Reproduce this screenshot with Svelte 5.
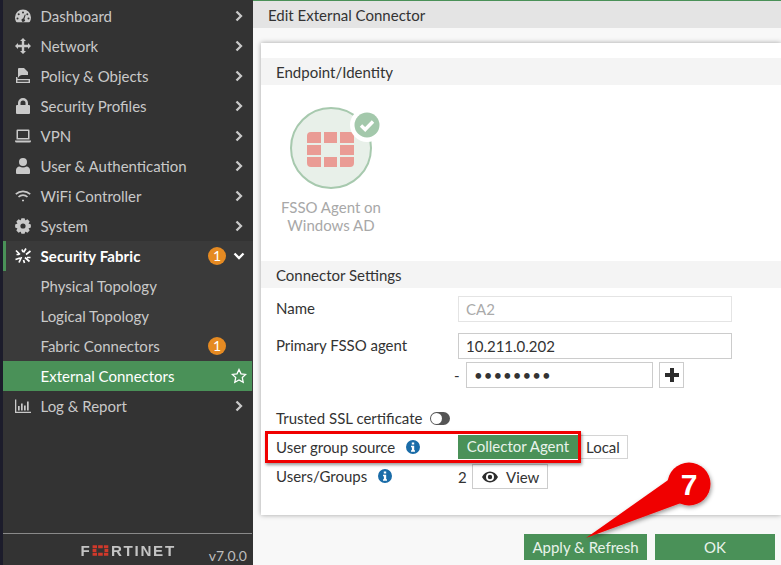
<script lang="ts">
	// eight-tooth gear, generated so the teeth stay even
	function gear() {
		let d = '';
		for (let i = 0; i < 8; i++) {
			const a = (i * Math.PI) / 4;
			const pts: [number, number][] = [
				[-0.42, 5.9],
				[-0.27, 8],
				[0.27, 8],
				[0.42, 5.9]
			];
			for (const [o, r] of pts) {
				const x = 8 + r * Math.sin(a + o * (r > 7 ? 0.72 : 1));
				const y = 8 - r * Math.cos(a + o * (r > 7 ? 0.72 : 1));
				d += (d ? 'L' : 'M') + x.toFixed(2) + ' ' + y.toFixed(2);
			}
		}
		return d + 'zM8 5.4a2.6 2.6 0 1 0 0 5.2a2.6 2.6 0 0 0 0-5.2z';
	}

	const icons: Record<string, { fill?: string; stroke?: string }> = {
		dashboard: {
			fill: 'M8 1.5a8 8 0 0 0-8 8c0 1.6.4 3 1.1 4.3c.2.3.5.5.9.5h12c.4 0 .7-.2.9-.5c.7-1.3 1.1-2.7 1.1-4.3a8 8 0 0 0-8-8zM8 3.5a1 1 0 1 1 0 2a1 1 0 0 1 0-2zM3.7 5.3a1 1 0 1 1 0 2a1 1 0 0 1 0-2zM12.3 5.3a1 1 0 1 1 0 2a1 1 0 0 1 0-2zM2.5 9.5a1 1 0 1 1 0 2a1 1 0 0 1 0-2zM13.5 9.5a1 1 0 1 1 0 2a1 1 0 0 1 0-2zM9.8 6.4l.9.4l-1.3 4.1a1.7 1.7 0 1 1-1.2-.4z'
		},
		network:
			{ fill: 'M8 0l3 3H9.200v3.800H13V5l3 3l-3 3V9.200H9.200V13H11l-3 3l-3-3h1.800V9.200H3V11L0 8l3-3v1.800h3.800V3H5z' },
		policy: {
			fill: 'M4 0h5l4 4v3H7C5.500 7 4 8 3.500 9.500H3V1a1 1 0 0 1 1-1zM1 9h1.400v1a1 1 0 0 0 1 1H15v4H1zM2.400 12.200v1.500h11.200v-1.500z'
		},
		lock: {
			fill: 'M2 7h1V5a5 5 0 0 1 10 0v2h1a1 1 0 0 1 1 1v7a1 1 0 0 1-1 1H2a1 1 0 0 1-1-1V8a1 1 0 0 1 1-1zM5.500 7h5V5a2.500 2.500 0 0 0-5 0z'
		},
		laptop: {
			fill: 'M2.500 1.500h11a1 1 0 0 1 1 1v9h-13v-9a1 1 0 0 1 1-1zM3 3v7h10V3zM0 12.500h16v.5a1.500 1.500 0 0 1-1.500 1.500h-13A1.500 1.500 0 0 1 0 13z'
		},
		user: {
			fill: 'M8 0a4 4 0 1 1 0 8a4 4 0 0 1 0-8zM4.500 8.500c1 .7 2.200 1 3.500 1s2.500-.3 3.500-1c2 .1 3.500 1.700 3.500 3.700V15a1 1 0 0 1-1 1H2a1 1 0 0 1-1-1v-2.800c0-2 1.500-3.600 3.500-3.700z'
		},
		wifi: {
			stroke: 'M.8 6.200a10.500 10.500 0 0 1 14.400 0M3.500 9a6.500 6.500 0 0 1 9 0M7 12.500h2'
		},
		system: { fill: gear() },
		fabric: {
			stroke: 'M1 2.500l4 4M11 0.500l-2.500 4M6.500 9l-2.500 5.500M10 9.500l4.500 4M15.500 3l-4.500 3.500M5 10l-4.500 1.500M1.500 6.500H4M12 9.500h3.500M7 1.500L8 4M8.500 12l1 3'
		},
		log: {
			fill: 'M0 1.500h1.300v12.200H16V15H0zM3 8h1.700v4.500H3zM6 5.500h1.700v7H6zM9 7.500h1.700v5H9zM12 3.500h1.700v9H12z'
		}
	};

	const menu = [
		{ label: 'Dashboard', icon: 'dashboard' },
		{ label: 'Network', icon: 'network' },
		{ label: 'Policy & Objects', icon: 'policy' },
		{ label: 'Security Profiles', icon: 'lock' },
		{ label: 'VPN', icon: 'laptop' },
		{ label: 'User & Authentication', icon: 'user' },
		{ label: 'WiFi Controller', icon: 'wifi' },
		{ label: 'System', icon: 'system' }
	];
</script>

{#snippet navIcon(name: string)}
	<svg class="nav-icon" viewBox="0 0 16 16" width="16" height="16" aria-hidden="true">
		{#if icons[name].fill}<path fill-rule="evenodd" d={icons[name].fill} />{/if}
		{#if icons[name].stroke}<path class="stroked" d={icons[name].stroke} />{/if}
	</svg>
{/snippet}

{#snippet chevron()}
	<svg class="chevron" viewBox="0 0 8 12" width="8" height="12" aria-hidden="true">
		<path d="M1.500 1.500L6 6l-4.500 4.500" />
	</svg>
{/snippet}

{#snippet info()}
	<svg class="info" viewBox="0 0 14 14" width="14" height="14" aria-hidden="true">
		<path
			fill-rule="evenodd"
			d="M7 0a7 7 0 1 1 0 14A7 7 0 0 1 7 0zM5.800 2.400v2.200h2.400V2.400zM5 5.800v1.500h.9v3H5v1.400h4v-1.400h-.8V5.800z"
		/>
	</svg>
{/snippet}

<div class="app">
	<aside class="sidebar">
		<nav class="menu">
			{#each menu as item (item.label)}
				<div class="row">
					{@render navIcon(item.icon)}
					<span class="label">{item.label}</span>
					{@render chevron()}
				</div>
			{/each}
			<div class="group">
				<div class="row open">
					{@render navIcon('fabric')}
					<span class="label">Security Fabric</span>
					<span class="badge">1</span>
					<svg class="chevron down" viewBox="0 0 12 8" width="12" height="8" aria-hidden="true">
						<path d="M1.500 1.500L6 6l4.500-4.500" />
					</svg>
				</div>
				<div class="row sub"><span class="label">Physical Topology</span></div>
				<div class="row sub"><span class="label">Logical Topology</span></div>
				<div class="row sub">
					<span class="label">Fabric Connectors</span>
					<span class="badge">1</span>
				</div>
				<div class="row sub active">
					<span class="label">External Connectors</span>
					<svg class="star" viewBox="0 0 16 16" width="16" height="16" aria-hidden="true">
						<path d="M8 1.500l2 4.300l4.700.6l-3.400 3.200l.9 4.700L8 12l-4.200 2.300l.9-4.700L1.300 6.400L6 5.800z" />
					</svg>
				</div>
			</div>
			<div class="row">
				{@render navIcon('log')}
				<span class="label">Log &amp; Report</span>
				{@render chevron()}
			</div>
		</nav>
		<footer class="side-foot">
			<span class="logo">F<svg viewBox="0 0 14 10" width="15" height="11" aria-hidden="true">
					<path
						d="M0 0h4v2.800H0zM5 0h4v2.800H5zM10 0h4v2.800h-4zM0 3.600h3.500v2.800H0zM10.500 3.600H14v2.800h-3.500zM0 7.200h4V10H0zM5 7.200h4V10H5zM10 7.200h4V10h-4z"
					/>
				</svg>RTINET</span>
			<span class="version">v7.0.0</span>
		</footer>
	</aside>

	<main class="main">
		<header class="title">Edit External Connector</header>
		<div class="body">
			<section class="card">
				<h2 class="section-head">Endpoint/Identity</h2>
				<div class="connector">
					<svg viewBox="0 0 100 88" width="100" height="88" aria-hidden="true">
						<circle cx="41" cy="43" r="40" fill="#e8f0e9" stroke="#a7c9ae" stroke-width="2" />
						<g fill="#ea9c95">
							<path d="M17 31a4 4 0 0 1 4-4h10v11H17zM34 27h13v11H34zM50 27h10a4 4 0 0 1 4 4v7H50z" />
							<path d="M17 40h14v10H17zM50 40h14v10H50z" />
							<path d="M17 52h14v10H21a4 4 0 0 1-4-4zM34 52h13v10H34zM50 52h14v6a4 4 0 0 1-4 4H50z" />
						</g>
						<circle cx="77" cy="20" r="17" fill="#fff" />
						<circle cx="77" cy="20" r="12.500" fill="#a3c8ab" />
						<path d="M71 20.500l4.200 4L83 16.500" fill="none" stroke="#fff" stroke-width="3.400" />
					</svg>
					<div class="connector-name">FSSO Agent on<br />Windows AD</div>
				</div>

				<h2 class="section-head">Connector Settings</h2>
				<div class="form">
					<div class="field">
						<span class="field-label raised">Name</span>
						<input class="text disabled" value="CA2" disabled />
					</div>
					<div class="field primary">
						<span class="field-label raised">Primary FSSO agent</span>
						<input class="text" value="10.211.0.202" />
					</div>
					<div class="field password">
						<span class="dash">-</span>
						<input class="text pass" type="password" value="12345678" />
						<button class="plus" aria-label="Add">
							<svg viewBox="0 0 14 14" width="14" height="14" aria-hidden="true">
								<path d="M5 0h4v5h5v4H9v5H5V9H0V5h5z" />
							</svg>
						</button>
					</div>
					<div class="field trusted">
						<span>Trusted SSL certificate</span>
						<span class="toggle"></span>
					</div>
					<div class="field source">
						<span class="field-label">User group source {@render info()}</span>
						<div class="segments">
							<span class="seg on">Collector Agent</span>
							<span class="seg">Local</span>
						</div>
					</div>
					<div class="field users">
						<span class="field-label">Users/Groups {@render info()}</span>
						<span class="count">2</span>
						<button class="view">
							<svg viewBox="0 0 16 12" width="16" height="12" aria-hidden="true">
								<path
									fill-rule="evenodd"
									d="M8 .500c3.500 0 6.300 2.200 8 5.500c-1.700 3.300-4.500 5.500-8 5.500S1.700 9.300 0 6C1.700 2.700 4.500 .500 8 .500zM8 2a4 4 0 1 0 0 8a4 4 0 0 0 0-8zM8 3.800a2.200 2.200 0 1 1 0 4.400a2.200 2.200 0 0 1 0-4.400z"
								/>
							</svg>
							View
						</button>
					</div>
				</div>
			</section>
			<div class="actions">
				<button class="primary-btn apply">Apply &amp; Refresh</button>
				<button class="primary-btn ok">OK</button>
			</div>
		</div>
	</main>

	<!-- screenshot annotations drawn on top of the page -->
	<div class="callout-box"></div>
	<svg class="callout" viewBox="0 0 781 565" width="781" height="565" aria-hidden="true">
		<defs>
			<filter id="drop" x="-20%" y="-20%" width="140%" height="140%">
				<feDropShadow dx="1" dy="2" stdDeviation="2" flood-opacity="0.4" />
			</filter>
		</defs>
		<g filter="url(#drop)" fill="#f00000">
			<path d="M586 538L671 478L681 503z" />
			<circle cx="689" cy="484" r="21.500" />
		</g>
		<text x="689" y="495" class="seven">7</text>
	</svg>
</div>

<style>
	:global(body) {
		margin: 0;
		font-family: Lato, 'Noto Sans', sans-serif;
		font-size: 15px;
	}
	.app {
		position: relative;
		display: flex;
		width: 781px;
		height: 565px;
		overflow: hidden;
		color: #333;
	}

	/* sidebar */
	.sidebar {
		box-sizing: border-box;
		display: flex;
		flex-direction: column;
		flex: 0 0 253px;
		border-left: 3px solid #1c1c2b;
		background: #333;
		color: #c9c9c9;
	}
	.menu {
		flex: 1;
		padding-top: 1px;
	}
	.row {
		display: flex;
		align-items: center;
		height: 30px;
		padding-left: 12px;
		padding-right: 10px;
	}
	.nav-icon {
		flex: none;
		margin-right: 10px;
		fill: #c9c9c9;
	}
	.stroked {
		fill: none;
		stroke: #c9c9c9;
		stroke-width: 1.700;
	}
	.label {
		flex: 1;
		white-space: nowrap;
		margin-left: -0.5px;
	}
	.chevron {
		flex: none;
		fill: none;
		stroke: #c9c9c9;
		stroke-width: 2.300;
	}
	.chevron.down {
		margin-left: 6px;
		margin-right: -2px;
		stroke: #fff;
	}
	.group {
		background: #3a3a3a;
	}
	.open {
		padding-left: 9px;
		border-left: 3px solid #4a9158;
		font-weight: 700;
		color: #fff;
	}
	.open .label {
		letter-spacing: 0.12px;
	}
	.open .stroked {
		stroke: #fff;
	}
	.sub {
		padding-left: 38px;
	}
	.badge {
		flex: none;
		width: 18px;
		height: 18px;
		margin-right: 1px;
		border-radius: 50%;
		background: #e58a22;
		color: #fff;
		font-size: 14px;
		font-weight: 400;
		line-height: 18px;
		text-align: center;
	}
	.sub .badge {
		margin-right: 17px;
	}
	.active {
		background: #4a9158;
		color: #fff;
		margin-right: 1px;
		padding-right: 5px;
	}
	.star {
		fill: none;
		stroke: #fff;
		stroke-width: 1.300;
	}
	.side-foot {
		position: relative;
		display: flex;
		align-items: center;
		justify-content: center;
		height: 31px;
		border-top: 1px solid #8a8a8a;
		margin-right: 1px;
	}
	.logo {
		display: flex;
		align-items: center;
		gap: 1px;
		margin-top: 2px;
		margin-left: 2px;
		font-family: 'Liberation Sans', sans-serif;
		font-size: 14px;
		font-weight: 700;
		letter-spacing: 1.600px;
		color: #c4c4c4;
		transform: scaleX(1.08);
	}
	.logo svg {
		fill: #d0392b;
		margin-right: 1px;
	}
	.version {
		position: absolute;
		right: 5px;
		bottom: 0;
		font-size: 14px;
		line-height: 18px;
		color: #bdbdbd;
	}

	/* main column */
	.main {
		display: flex;
		flex-direction: column;
		flex: 1;
		min-width: 0;
		border-top: 1px solid #4a9158;
		background: #f8f8f8;
	}
	.title {
		flex: none;
		height: 27px;
		padding-left: 15px;
		line-height: 29px;
		background: #e4e4e4;
		color: #333;
	}
	.body {
		flex: 1;
		display: flex;
		flex-direction: column;
		padding: 15px 0 0 8px;
	}
	.card {
		box-sizing: border-box;
		height: 472px;
		padding-top: 15px;
		background: #fff;
		box-shadow: 0 0 5px rgba(0, 0, 0, 0.35);
	}
	.section-head {
		height: 27px;
		margin: 0;
		padding-left: 15px;
		background: #f4f4f4;
		font-size: 15px;
		font-weight: 400;
		line-height: 29px;
		color: #333;
	}
	.connector {
		box-sizing: border-box;
		height: 176px;
		width: 140px;
		padding-top: 20px;
		text-align: center;
	}
	.connector svg {
		display: block;
		margin-left: 29px;
	}
	.connector-name {
		margin-top: 5px;
		line-height: 18px;
		color: #a8a8a8;
	}
	.form {
		padding: 8px 0 0 15px;
	}
	.field {
		display: flex;
		align-items: center;
		height: 26px;
	}
	.field-label {
		flex: 0 0 182px;
		white-space: nowrap;
		letter-spacing: -0.02px;
	}
	.raised {
		margin-top: -2px;
	}
	.text {
		box-sizing: border-box;
		width: 274px;
		height: 26px;
		padding: 0 7px 1px;
		border: 1px solid #ccc;
		font: inherit;
		color: #333;
		background: #fff;
		outline: none;
	}
	.disabled {
		border: 1px solid #e4e4e4;
		color: #aaa;
	}
	.primary {
		margin-top: 11px;
	}
	.password {
		margin-top: 3px;
		padding-left: 178px;
	}
	.dash {
		width: 12px;
	}
	.pass {
		width: 187px;
		letter-spacing: 1px;
	}
	.plus {
		box-sizing: border-box;
		display: flex;
		align-items: center;
		justify-content: center;
		width: 25px;
		height: 26px;
		margin-left: 6px;
		padding: 0;
		border: 1px solid #ccc;
		background: #fff;
	}
	.plus svg {
		fill: #2c2c2c;
	}
	.trusted {
		height: 20px;
		margin-top: 20px;
		gap: 8px;
	}
	.toggle {
		position: relative;
		box-sizing: border-box;
		width: 20px;
		height: 13px;
		border-radius: 7px;
		background: #555;
	}
	.toggle::after {
		content: '';
		position: absolute;
		left: 1px;
		top: 1px;
		width: 11px;
		height: 11px;
		border-radius: 50%;
		background: #fff;
	}
	.info {
		fill: #1a6ca8;
		margin-left: 7px;
		vertical-align: -1px;
	}
	.source {
		height: 24px;
		margin-top: 7px;
	}
	.segments {
		display: flex;
	}
	.seg {
		box-sizing: border-box;
		width: 50px;
		height: 24px;
		padding-left: 8px;
		line-height: 23px;
		border: 1px solid #d4d4d4;
		border-left: 0;
	}
	.seg.on {
		width: 120px;
		padding: 0;
		text-align: center;
		border: 0;
		background: #4a9158;
		color: #e9f3eb;
	}
	.users {
		height: 25px;
		margin-top: 5px;
	}
	.users .field-label {
		margin-top: -1px;
	}
	.count {
		width: 14px;
	}
	.view {
		box-sizing: border-box;
		display: flex;
		align-items: center;
		gap: 8px;
		width: 76px;
		height: 25px;
		padding: 0 0 0 9px;
		border: 1px solid #ccc;
		background: #fff;
		font: inherit;
		color: #333;
	}
	.view svg {
		fill: #2c2c2c;
	}

	.actions {
		display: flex;
		gap: 8px;
		margin-top: 19px;
		padding-left: 263px;
	}
	.primary-btn {
		height: 26px;
		padding: 0;
		border: 0;
		background: #4a9158;
		color: #e9f3eb;
		font: inherit;
	}
	.apply {
		width: 123px;
	}
	.ok {
		width: 120px;
	}

	/* annotations */
	.callout-box {
		position: absolute;
		left: 265px;
		top: 431px;
		width: 310px;
		height: 26px;
		border: 3px solid #f00000;
		box-shadow: 1px 2px 3px rgba(0, 0, 0, 0.4);
	}
	.callout {
		position: absolute;
		left: 0;
		top: 0;
		pointer-events: none;
	}
	.seven {
		font-family: 'Liberation Sans', sans-serif;
		font-size: 30px;
		font-weight: 700;
		fill: #fff;
		text-anchor: middle;
	}
</style>
